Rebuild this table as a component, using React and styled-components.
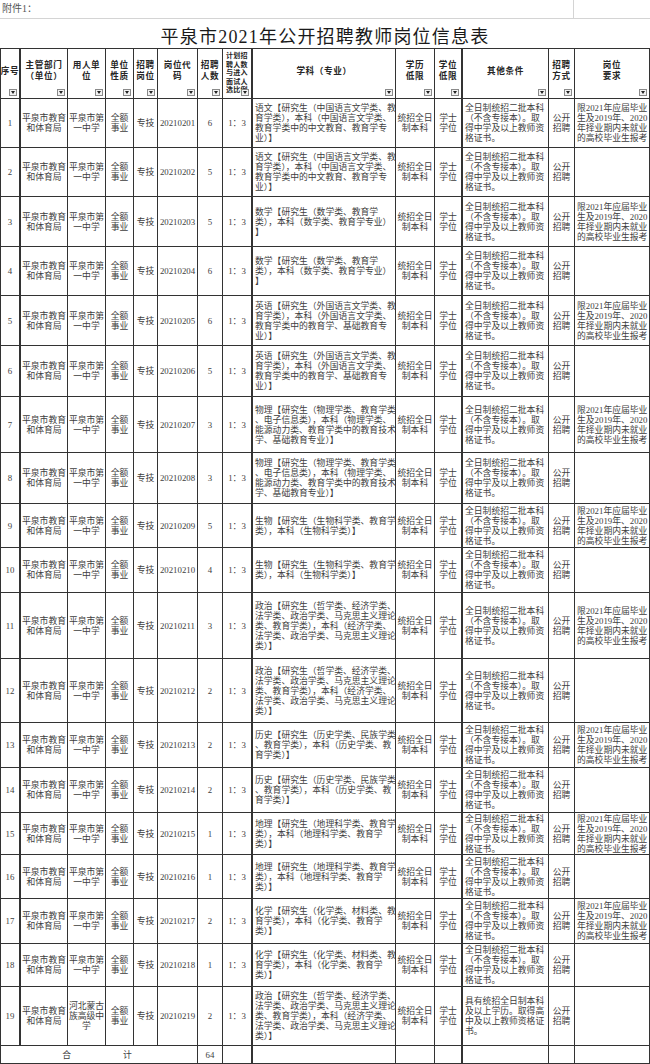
import React from 'react'
import styled, { createGlobalStyle } from 'styled-components'

// column widths taken from the grid lines of the sheet
const colWidths = [20, 47, 38, 28, 24, 40, 25, 30, 143, 39, 28, 86, 26, 75]
const thickCols = [0, 7, 10]
const lineColor = '#333'

const GlobalStyle = createGlobalStyle`
  html, body {
    margin: 0;
    padding: 0;
    background: #fff;
  }
  body {
    font-family: "Liberation Serif", "Noto Sans CJK SC", serif;
    color: #222;
  }
`

const Page = styled.div`
  width: 650px;
  height: 1064px;
  overflow: hidden;
  background: #fff;
`

const TopBar = styled.div`
  display: grid;
  grid-template-columns: 574px 1fr;
  height: 19px;
  box-sizing: border-box;
  border-bottom: 1px solid #d4d4d4;
`

const Attach = styled.div`
  font-size: 10px;
  line-height: 18px;
  padding-left: 2px;
  color: #555;
  border-right: 1px solid #d4d4d4;
`

const Title = styled.h1`
  margin: 0;
  height: 29px;
  display: flex;
  align-items: center;
  justify-content: center;
  font-size: 18px;
  font-weight: 400;
  letter-spacing: 1.2px;
  color: #1a1a1a;
  padding-top: 3px;
  box-sizing: border-box;
`

const Table = styled.div`
  border-top: 1px solid ${lineColor};
  border-left: 1px solid ${lineColor};
`

const Row = styled.div`
  display: grid;
  grid-template-columns: ${colWidths.map((w) => w + 'px').join(' ')};
  height: ${(p) => p.$h}px;
`

const Cell = styled.div`
  position: relative;
  box-sizing: border-box;
  border-right: ${(p) => (p.$thick ? 2 : 1)}px solid ${lineColor};
  border-bottom: 1px solid ${lineColor};
  display: flex;
  flex-direction: column;
  justify-content: center;
  align-items: ${(p) => (p.$left ? 'flex-start' : 'center')};
  padding: 0 ${(p) => (p.$left ? 2 : 1)}px;
  font-size: 8.8px;
  line-height: 10px;
  color: #3e3e3e;
  overflow: hidden;
  grid-column: ${(p) => (p.$span ? `span ${p.$span}` : 'auto')};
`

const HeadCell = styled(Cell)`
  font-weight: 700;
  font-size: 8.6px;
  line-height: 11px;
  letter-spacing: 0.6px;
  padding-bottom: 5px;
  color: #262626;
`

const TinyHead = styled(HeadCell)`
  font-size: 7px;
  line-height: 8.6px;
  letter-spacing: 0.2px;
  justify-content: flex-start;
  align-items: flex-start;
  padding: 3px 0 0 3px;
`

const Line = styled.span`
  display: block;
  white-space: pre;
`

const FilterBtn = styled.span`
  position: absolute;
  right: 2px;
  bottom: 2px;
  width: 8px;
  height: 7px;
  box-sizing: border-box;
  border: 1px solid #8a8a8a;
  background: #f2f2f2;
  display: flex;
  align-items: center;
  justify-content: center;
`

const TotalLabel = styled.div`
  display: flex;
  gap: 52px;
  padding-right: 4px;
`

const Filter = () => (
  <FilterBtn>
    <svg width="4" height="3" viewBox="0 0 4 3">
      <path d="M0 0 L4 0 L2 3 Z" fill="#222" />
    </svg>
  </FilterBtn>
)

const Lines = ({ items }) => items.map((t, i) => <Line key={i}>{t}</Line>)

const subjects = {
  yuwen: ['语文【研究生（中国语言文学类、教', '育学类），本科（中国语言文学类、', '教育学类中的中文教育、教育学专', '业）】'],
  shuxue: ['数学【研究生（数学类、教育学', '类），本科（数学类、教育学专业）', '】'],
  yingyu: ['英语【研究生（外国语言文学类、教', '育学类），本科（外国语言文学类、', '教育学类中的教育学、基础教育专', '业）】'],
  wuli: ['物理【研究生（物理学类、教育学类', '、电子信息类），本科（物理学类、', '能源动力类、教育学类中的教育技术', '学、基础教育专业）】'],
  shengwu: ['生物【研究生（生物科学类、教育学', '类），本科（生物科学类）】'],
  zhengzhi: ['政治【研究生（哲学类、经济学类、', '法学类、政治学类、马克思主义理论', '类、教育学类），本科（经济学类、', '法学类、政治学类、马克思主义理论', '类）】'],
  lishi: ['历史【研究生（历史学类、民族学类', '、教育学类），本科（历史学类、教', '育学类）】'],
  dili: ['地理【研究生（地理科学类、教育学', '类），本科（地理科学类、教育学', '类）】'],
  huaxue: ['化学【研究生（化学类、材料类、教', '育学类），本科（化学类、教育学', '类）】'],
}

const otherCond = ['全日制统招二批本科', '（不含专接本）。取', '得中学及以上教师资', '格证书。']
const otherCond19 = ['具有统招全日制本科', '及以上学历。取得高', '中及以上教师资格证', '书。']
const limitText = ['限2021年应届毕业', '生及2019年、2020', '年择业期内未就业', '的高校毕业生报考']

const order = ['yuwen', 'yuwen', 'shuxue', 'shuxue', 'yingyu', 'yingyu', 'wuli', 'wuli', 'shengwu', 'shengwu',
  'zhengzhi', 'zhengzhi', 'lishi', 'lishi', 'dili', 'dili', 'huaxue', 'huaxue', 'zhengzhi']
const counts = [6, 5, 5, 6, 6, 5, 3, 3, 5, 4, 3, 2, 2, 2, 1, 1, 2, 1, 2]
const heights = [49, 49, 50, 49, 50, 51, 56, 51, 44, 45, 66, 64, 45, 45, 42, 44, 45, 43, 59]

const rows = order.map((key, i) => {
  const n = i + 1
  return {
    n,
    h: heights[i],
    unit: n === 19 ? ['河北蒙古', '族高级中', '学'] : ['平泉市第', '一中学'],
    code: '202102' + String(n).padStart(2, '0'),
    count: counts[i],
    subject: subjects[key],
    other: n === 19 ? otherCond19 : otherCond,
    limit: n % 2 === 1 && n !== 19 ? limitText : null,
  }
})

const headers = [
  ['序号'],
  ['主管部门', '（单位）'],
  ['用人单', '位'],
  ['单位', '性质'],
  ['招聘', '岗位'],
  ['岗位代', '码'],
  ['招聘', '人数'],
  null,
  ['学科（专业）'],
  ['学历', '低限'],
  ['学位', '低限'],
  ['其他条件'],
  ['招聘', '方式'],
  ['岗位', '要求'],
]

export default function App() {
  return (
    <Page>
      <GlobalStyle />
      <TopBar>
        <Attach>附件1：</Attach>
        <div />
      </TopBar>
      <Title>平泉市2021年公开招聘教师岗位信息表</Title>
      <Table>
        <Row $h={50}>
          {headers.map((h, i) =>
            h ? (
              <HeadCell key={i} $thick={thickCols.includes(i)}>
                <Lines items={h} />
                <Filter />
              </HeadCell>
            ) : (
              <TinyHead key={i} $thick>
                <Lines items={['计划招', '聘人数', '与进入', '面试人', '选比例']} />
                <Filter />
              </TinyHead>
            )
          )}
        </Row>
        {rows.map((r) => (
          <Row key={r.n} $h={r.h}>
            <Cell $thick>{r.n}</Cell>
            <Cell><Lines items={['平泉市教育', '和体育局']} /></Cell>
            <Cell><Lines items={r.unit} /></Cell>
            <Cell><Lines items={['全额', '事业']} /></Cell>
            <Cell>专技</Cell>
            <Cell>{r.code}</Cell>
            <Cell>{r.count}</Cell>
            <Cell $thick>1：3</Cell>
            <Cell $left><Lines items={r.subject} /></Cell>
            <Cell><Lines items={['统招全日', '制本科']} /></Cell>
            <Cell $thick><Lines items={['学士', '学位']} /></Cell>
            <Cell $left><Lines items={r.other} /></Cell>
            <Cell><Lines items={['公开', '招聘']} /></Cell>
            <Cell $left>{r.limit && <Lines items={r.limit} />}</Cell>
          </Row>
        ))}
        <Row $h={18}>
          <Cell $span={6}>
            <TotalLabel><span>合</span><span>计</span></TotalLabel>
          </Cell>
          <Cell>64</Cell>
          <Cell $thick />
          <Cell />
          <Cell />
          <Cell $thick />
          <Cell />
          <Cell />
          <Cell />
        </Row>
      </Table>
    </Page>
  )
}
